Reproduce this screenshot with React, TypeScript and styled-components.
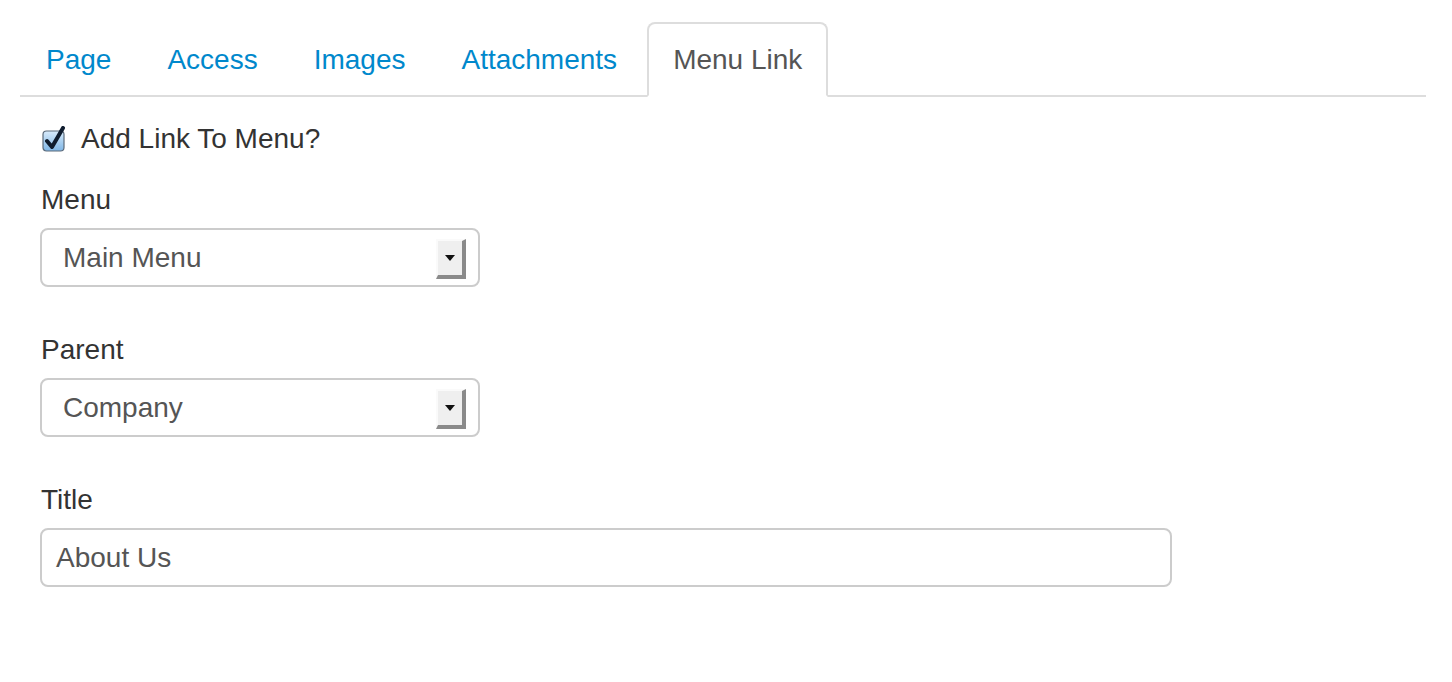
import React from "react";
import styled, { createGlobalStyle } from "styled-components";

const Global = createGlobalStyle`
  html, body { margin: 0; padding: 0; background: #fff; }
  body { font-family: "Liberation Sans", Arial, Helvetica, sans-serif; color: #333; }
`;

const Page = styled.div`
  padding: 22px 26px 0 20px;
`;

const Tabs = styled.ul`
  display: flex;
  list-style: none;
  margin: 0;
  padding: 0;
  border-bottom: 2px solid #ddd;
  height: 73px;
`;

const Tab = styled.li<{ $active?: boolean }>`
  margin: 0 4px -2px 0;
  padding: 1px 24px 1px 24px;
  height: 71px;
  box-sizing: content-box;
  display: flex;
  align-items: center;
  font-size: 28px;
  border: 2px solid ${(p) => (p.$active ? "#ddd" : "transparent")};
  border-bottom-color: ${(p) => (p.$active ? "#fff" : "transparent")};
  border-radius: 8px 8px 0 0;
  background: ${(p) => (p.$active ? "#fff" : "transparent")};
  color: ${(p) => (p.$active ? "#555" : "#0088cc")};
  height: 69px;
`;

const Form = styled.div`
  display: flex;
  flex-direction: column;
  padding-left: 20px;
  padding-top: 26px;
`;

const CheckRow = styled.label`
  display: flex;
  align-items: center;
  gap: 15px;
  font-size: 28px;
  color: #333;
  height: 32px;
  margin-bottom: 29px;
  padding-left: 2px;
`;

const Group = styled.div`
  display: flex;
  flex-direction: column;
  margin-bottom: 47px;
`;

const Label = styled.div`
  font-size: 28px;
  line-height: 32px;
  color: #333;
  margin-bottom: 12px;
  padding-left: 1px;
`;

const Select = styled.div`
  box-sizing: border-box;
  width: 440px;
  height: 59px;
  border: 2px solid #ccc;
  border-radius: 8px;
  display: flex;
  align-items: center;
  justify-content: space-between;
  padding: 0 12px 0 21px;
  font-size: 28px;
  color: #555;
  background: #fff;
`;

const ArrowBtn = styled.div`
  box-sizing: border-box;
  width: 30px;
  height: 40px;
  margin-top: 2px;
  background: #efefef;
  border-top: 2px solid #fafafa;
  border-left: 2px solid #fafafa;
  border-right: 4px solid #8a8a8a;
  border-bottom: 4px solid #8a8a8a;
  display: flex;
  align-items: center;
  justify-content: center;
`;

const TextInput = styled.div`
  box-sizing: border-box;
  width: 1132px;
  height: 59px;
  border: 2px solid #ccc;
  border-radius: 8px;
  display: flex;
  align-items: center;
  padding-left: 14px;
  font-size: 28px;
  color: #555;
`;

const Arrow = () => (
  <svg width="10" height="6" viewBox="0 0 10 6">
    <polygon points="0,0 10,0 5,6" fill="#111" />
  </svg>
);

const CheckBox = () => (
  <svg width="24" height="26" viewBox="0 0 24 26">
    <defs>
      <linearGradient id="cb" x1="0" y1="0" x2="0" y2="1">
        <stop offset="0" stopColor="#d8ebfb" />
        <stop offset="1" stopColor="#7fb6e6" />
      </linearGradient>
    </defs>
    <rect x="1" y="5" width="21" height="20" rx="3.5" fill="url(#cb)" stroke="#5b6a7a" strokeWidth="1.2" />
    <path d="M5 15 L10 21 L21 2" fill="none" stroke="#0f1c2e" strokeWidth="4" strokeLinecap="round" strokeLinejoin="round" />
  </svg>
);

export default function App() {
  return (
    <>
      <Global />
      <Page>
        <Tabs>
          <Tab>Page</Tab>
          <Tab>Access</Tab>
          <Tab>Images</Tab>
          <Tab>Attachments</Tab>
          <Tab $active>Menu Link</Tab>
        </Tabs>
        <Form>
          <CheckRow>
            <CheckBox />
            Add Link To Menu?
          </CheckRow>
          <Group>
            <Label>Menu</Label>
            <Select>
              Main Menu
              <ArrowBtn>
                <Arrow />
              </ArrowBtn>
            </Select>
          </Group>
          <Group>
            <Label>Parent</Label>
            <Select>
              Company
              <ArrowBtn>
                <Arrow />
              </ArrowBtn>
            </Select>
          </Group>
          <Group>
            <Label>Title</Label>
            <TextInput>About Us</TextInput>
          </Group>
        </Form>
      </Page>
    </>
  );
}
